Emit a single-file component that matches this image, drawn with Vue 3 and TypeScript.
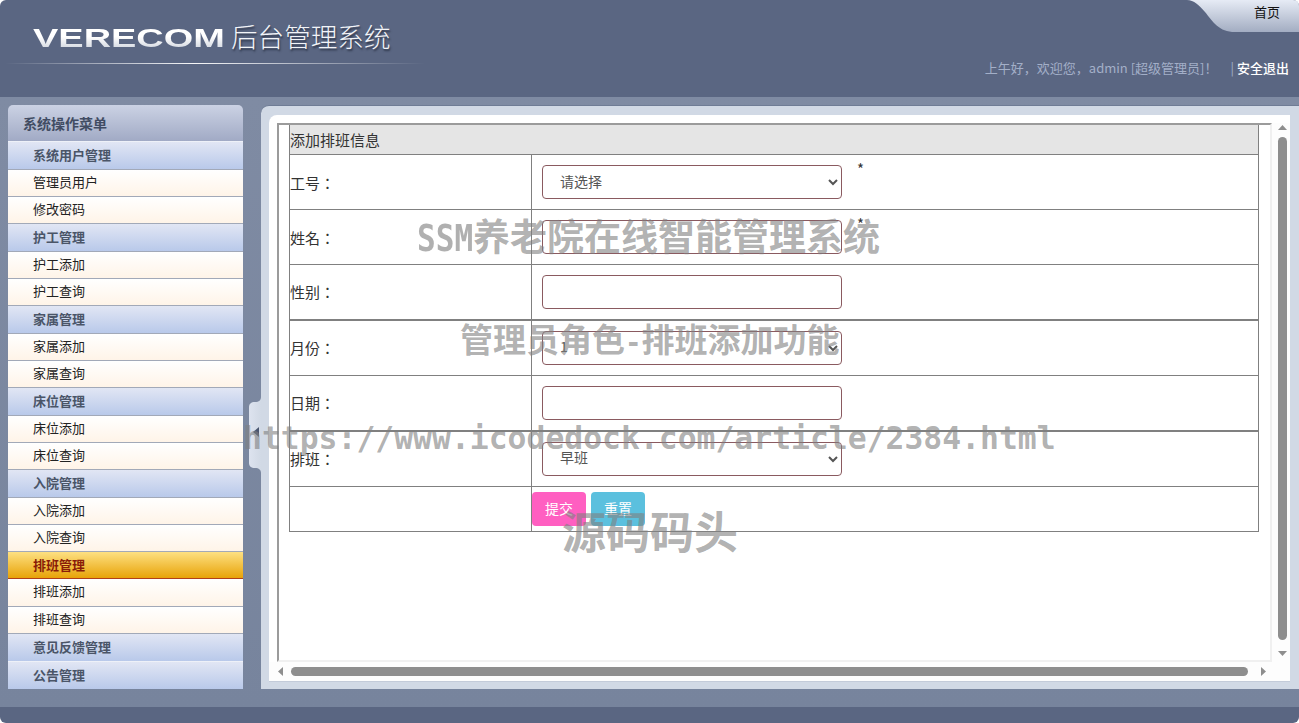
<script setup lang="ts">
type Item = { label: string; kind: 'group' | 'sub' | 'active' }
const groups: Array<[string, string[]]> = [
  ['系统用户管理', ['管理员用户', '修改密码']],
  ['护工管理', ['护工添加', '护工查询']],
  ['家属管理', ['家属添加', '家属查询']],
  ['床位管理', ['床位添加', '床位查询']],
  ['入院管理', ['入院添加', '入院查询']],
  ['排班管理', ['排班添加', '排班查询']],
  ['意见反馈管理', []],
  ['公告管理', []],
]
const menu: Item[] = groups.flatMap(([g, subs]) => [
  { label: g, kind: g === '排班管理' ? 'active' : 'group' } as Item,
  ...subs.map((s) => ({ label: s, kind: 'sub' } as Item)),
])
type Row = { label: string; type: 'select' | 'input'; value?: string; star?: boolean; h: number; thick?: boolean }
const rows: Row[] = [
  { label: '工号：', type: 'select', value: '请选择', star: true, h: 55 },
  { label: '姓名：', type: 'input', star: true, h: 55 },
  { label: '性别：', type: 'input', h: 55 },
  { label: '月份：', type: 'select', value: '1', h: 56, thick: true },
  { label: '日期：', type: 'input', h: 55 },
  { label: '排班：', type: 'select', value: '早班', h: 56, thick: true },
]
</script>

<template>
  <div class="page">
    <header class="top">
      <div class="brand">
        <div class="brand-line">
          <span class="logo">VERECOM</span>
          <span class="brand-cn">后台管理系统</span>
        </div>
        <div class="brand-rule"></div>
      </div>
      <div class="top-right">
        <div class="home-tab">
          <svg class="home-bg" width="112" height="32" viewBox="0 0 112 32" aria-hidden="true">
            <defs>
              <linearGradient id="tabg" x1="0" y1="0" x2="0" y2="1">
                <stop offset="0" stop-color="#e6ebf5" />
                <stop offset="1" stop-color="#a3adc2" />
              </linearGradient>
            </defs>
            <path d="M0 0 H106 Q112 0 112 6 V32 H48 C32 32 26 22 18 12 C12 5 7 0 0 0 Z" fill="url(#tabg)" />
          </svg>
          <span class="home-text">首页</span>
        </div>
        <div class="welcome">
          <span>上午好，欢迎您，admin [超级管理员]！</span>
          <span class="sep">|</span>
          <span class="logout">安全退出</span>
        </div>
      </div>
    </header>

    <main class="body">
      <aside class="side">
        <div class="side-title">系统操作菜单</div>
        <div v-for="m in menu" :key="m.label" class="menu-item" :class="m.kind">{{ m.label }}</div>
      </aside>

      <div class="gutter">
        <svg class="handle" width="12" height="76" viewBox="0 0 12 76" aria-hidden="true">
          <defs>
            <linearGradient id="hg" x1="0" y1="0" x2="1" y2="0">
              <stop offset="0" stop-color="#dde3ef" />
              <stop offset="1" stop-color="#d1d9e5" />
            </linearGradient>
          </defs>
          <path d="M12 0 C12 3 10 5 6 5 C2 5 0 7 0 10 V66 C0 69 2 71 6 71 C10 71 12 73 12 76 Z" fill="url(#hg)" />
          <path d="M4 35 L10 30 V40 Z" fill="#4a5670" />
        </svg>
      </div>

      <section class="panel">
        <div class="white">
          <div class="frame-row">
            <div class="viewport">
              <table class="form">
                <colgroup>
                  <col class="c1" />
                  <col />
                </colgroup>
                <tbody>
                  <tr class="head"><td colspan="2">添加排班信息</td></tr>
                  <tr v-for="r in rows" :key="r.label" :class="{ thick: r.thick }" :style="{ height: r.h + 'px' }">
                    <td class="lab">{{ r.label }}</td>
                    <td class="val">
                      <select v-if="r.type === 'select'" class="ctl">
                        <option>{{ r.value }}</option>
                      </select>
                      <input v-else class="ctl" type="text" />
                      <span v-if="r.star" class="star">*</span>
                    </td>
                  </tr>
                  <tr class="actions">
                    <td></td>
                    <td>
                      <div class="btns">
                        <button class="btn pink" type="button">提交</button>
                        <button class="btn blue" type="button">重置</button>
                      </div>
                    </td>
                  </tr>
                </tbody>
              </table>
            </div>
            <div class="vbar">
              <svg class="arrow" width="9" height="5" viewBox="0 0 9 5" aria-hidden="true"><path d="M4.5 0 L9 5 H0 Z" fill="#8e8e8e" /></svg>
              <div class="vthumb"></div>
              <svg class="arrow" width="9" height="5" viewBox="0 0 9 5" aria-hidden="true"><path d="M0 0 H9 L4.5 5 Z" fill="#8e8e8e" /></svg>
            </div>
          </div>
          <div class="hbar">
            <svg width="5" height="9" viewBox="0 0 5 9" aria-hidden="true"><path d="M0 4.5 L5 0 V9 Z" fill="#8e8e8e" /></svg>
            <div class="hthumb"></div>
            <svg width="5" height="9" viewBox="0 0 5 9" aria-hidden="true"><path d="M0 0 L5 4.5 L0 9 Z" fill="#8e8e8e" /></svg>
          </div>
        </div>
      </section>
    </main>

    <footer class="bottom"></footer>

    <div class="wm w1"><span class="lat1">SSM</span>养老院在线智能管理系统</div>
    <div class="wm w2">管理员角色<span class="lat2">-</span>排班添加功能</div>
    <div class="wm w3">https://www.icodedock.com/article/2384.html</div>
    <div class="wm w4">源码码头</div>
  </div>
</template>

<style scoped>
.page {
  position: relative;
  height: 723px;
  overflow: hidden;
  display: flex;
  flex-direction: column;
  font-family: "Noto Sans CJK SC", "Liberation Sans", sans-serif;
  font-size: 13px;
  color: #333;
}
.top {
  height: 97px;
  flex: none;
  background: #5a6682;
  border-radius: 6px 6px 0 0;
  display: flex;
  justify-content: space-between;
}
.brand {
  width: 420px;
  margin-left: 5px;
  padding-top: 18px;
}
.brand-line {
  height: 40px;
  display: flex;
  align-items: center;
  padding-left: 28px;
}
.logo {
  display: inline-block;
  width: 131px;
  margin-right: 67px;
  transform: scaleX(1.46);
  transform-origin: left center;
  font-family: "Liberation Sans", sans-serif;
  font-weight: 700;
  font-size: 26px;
  line-height: 30px;
  white-space: nowrap;
  background: linear-gradient(#ffffff 45%, #c4cad6);
  -webkit-background-clip: text;
  background-clip: text;
  color: transparent;
}
.brand-cn {
  font-size: 26.6px;
  line-height: 40px;
  margin-top: -4px;
  font-weight: 300;
  color: #f2f4f8;
  text-shadow: 1px 2px 2px #2c3447;
  white-space: nowrap;
}
.brand-rule {
  height: 1px;
  margin-top: 5px;
  background: linear-gradient(90deg, rgba(255, 255, 255, 0), rgba(255, 255, 255, 0.95) 45%, rgba(255, 255, 255, 0));
}
.top-right {
  display: flex;
  flex-direction: column;
  align-items: flex-end;
}
.home-tab {
  position: relative;
  width: 112px;
  height: 32px;
  display: flex;
  justify-content: flex-end;
}
.home-bg {
  position: absolute;
  left: 0;
  top: 0;
}
.home-text {
  position: relative;
  width: 45px;
  padding-top: 3px;
  font-size: 13px;
  line-height: 18px;
  color: #111;
}
.welcome {
  margin-top: 27px;
  padding-right: 10px;
  display: flex;
  font-size: 13px;
  line-height: 18px;
  color: #a3afc8;
  white-space: nowrap;
}
.sep {
  margin-left: 13px;
  margin-right: 3px;
}
.logout {
  color: #fff;
  font-weight: 500;
}
.body {
  flex: 1;
  min-height: 0;
  display: flex;
  padding: 8px 0 18px 8px;
  background: linear-gradient(#7f8ba3, #77849d);
}
.side {
  width: 235px;
  flex: none;
  overflow: hidden;
  border-radius: 5px 5px 0 0;
}
.side-title {
  height: 36px;
  padding-left: 15px;
  font-size: 14px;
  font-weight: 700;
  line-height: 36px;
  color: #414c63;
  background: linear-gradient(#cbd2e4, #a1aac5);
}
.menu-item {
  padding-left: 25px;
  box-sizing: border-box;
  font-size: 13px;
  white-space: nowrap;
}
.group {
  height: 28px;
  line-height: 25px;
  font-weight: 700;
  color: #4a5568;
  border-top: 1px solid #eef1f8;
  background: linear-gradient(#e1e6f4, #b9c9ea);
}
.sub {
  height: 27px;
  line-height: 24px;
  color: #222;
  border-top: 1px solid #a2a9b8;
  background: linear-gradient(#ffffff, #fff4e8);
}
.sub + .group {
  border-top-color: #a2a9b8;
}
.active {
  height: 28px;
  line-height: 25px;
  font-weight: 700;
  color: #8a1c08;
  border-top: 1px solid #a2a9b8;
  border-bottom: 1px solid #b0401a;
  background: linear-gradient(#fde082, #e8a308);
}
.active + .sub {
  border-top: 0;
}
.gutter {
  width: 18px;
  flex: none;
  padding: 292px 0 0 6px;
  box-sizing: border-box;
}
.handle {
  display: block;
}
.panel {
  flex: 1;
  min-width: 0;
  box-sizing: border-box;
  padding: 9px 9px 8px 8px;
  background: #d1d9e5;
  border-top: 1px solid #6f7c95;
  border-radius: 8px 0 0 0;
}
.white {
  height: 100%;
  box-sizing: border-box;
  background: #fff;
  border-radius: 8px 0 0 0;
  padding: 8px 0 0 8px;
  display: flex;
  flex-direction: column;
  box-shadow: 0 1px 0 #c3cbd9;
}
.frame-row {
  flex: 1;
  min-height: 0;
  display: flex;
}
.viewport {
  flex: 1;
  min-width: 0;
  box-sizing: border-box;
  padding-left: 10px;
  border: 2px solid #f0f0f0;
  border-left-color: #9b9b9b;
  border-top-color: #9b9b9b;
  overflow: hidden;
}
.form {
  width: 970px;
  table-layout: fixed;
  border-collapse: collapse;
  font-family: "Noto Sans CJK TC", "Noto Sans CJK SC", "Liberation Sans", sans-serif;
  font-size: 15px;
  color: #333;
}
.c1 {
  width: 242px;
}
.form td {
  border: 1px solid #808080;
  padding: 0;
}
.head td {
  height: 29px;
  background: #e5e5e5;
  font-family: "Noto Sans CJK SC", sans-serif;
  border-top: 0;
}
.thick td {
  border-top-width: 2px;
}
.lab {
  line-height: 20px;
  padding-top: 1px !important;
}
.val {
  position: relative;
  padding-left: 10px !important;
}
.ctl {
  display: block;
  box-sizing: border-box;
  width: 300px;
  height: 34px;
  padding: 0 0 3px 13px;
  background: #fff;
  border: 1px solid #8a5a60;
  border-radius: 4px;
  font-family: "Noto Sans CJK SC", sans-serif;
  font-size: 14px;
  color: #555;
}
.star {
  position: absolute;
  left: 325px;
  top: 5px;
  font-size: 15px;
  line-height: 18px;
  color: #333;
}
.actions {
  height: 45px;
}
.btns {
  display: flex;
  gap: 5px;
  height: 34px;
}
.btn {
  width: 54px;
  height: 34px;
  border: 0;
  border-radius: 4px;
  padding: 0 0 2px;
  color: #fff;
  font-family: "Noto Sans CJK SC", sans-serif;
  font-size: 14px;
}
.pink {
  background: #ff5fc1;
}
.blue {
  background: #5bc0de;
}
.vbar {
  width: 18px;
  flex: none;
  padding: 2px 3px 6px 6px;
  box-sizing: border-box;
  background: #fdfdfd;
  display: flex;
  flex-direction: column;
  align-items: center;
}
.arrow {
  flex: none;
  display: block;
}
.vthumb {
  flex: 1;
  width: 9px;
  margin: 7px 0 11px;
  background: #8e8e8e;
  border-radius: 5px;
}
.hbar {
  height: 19px;
  flex: none;
  margin-left: -8px;
  padding: 0 24px 0 9px;
  background: #fdfdfd;
  display: flex;
  align-items: center;
  gap: 8px;
  box-sizing: border-box;
}
.hthumb {
  flex: 1;
  height: 9px;
  margin-right: 5px;
  background: #8e8e8e;
  border-radius: 5px;
}
.bottom {
  height: 16px;
  flex: none;
  background: #5a6682;
  border-radius: 0 0 6px 6px;
}
.wm {
  position: absolute;
  white-space: nowrap;
  font-weight: 700;
  color: rgba(128, 128, 128, 0.62);
  font-family: "DejaVu Sans Mono", "Noto Sans CJK SC", monospace;
  pointer-events: none;
}
.lat1 {
  display: inline-block;
  width: 56px;
  transform: scaleX(0.84);
  transform-origin: left center;
}
.lat2 {
  font-size: 27.5px;
}
.w1 {
  left: 417px;
  top: 214px;
  font-size: 37px;
  line-height: 50px;
}
.w2 {
  left: 460px;
  top: 317px;
  font-size: 33px;
  line-height: 48px;
}
.w3 {
  left: 243px;
  top: 415px;
  font-size: 31.4px;
  line-height: 46px;
}
.w4 {
  left: 562px;
  top: 504px;
  font-size: 44px;
  line-height: 60px;
}
</style>
